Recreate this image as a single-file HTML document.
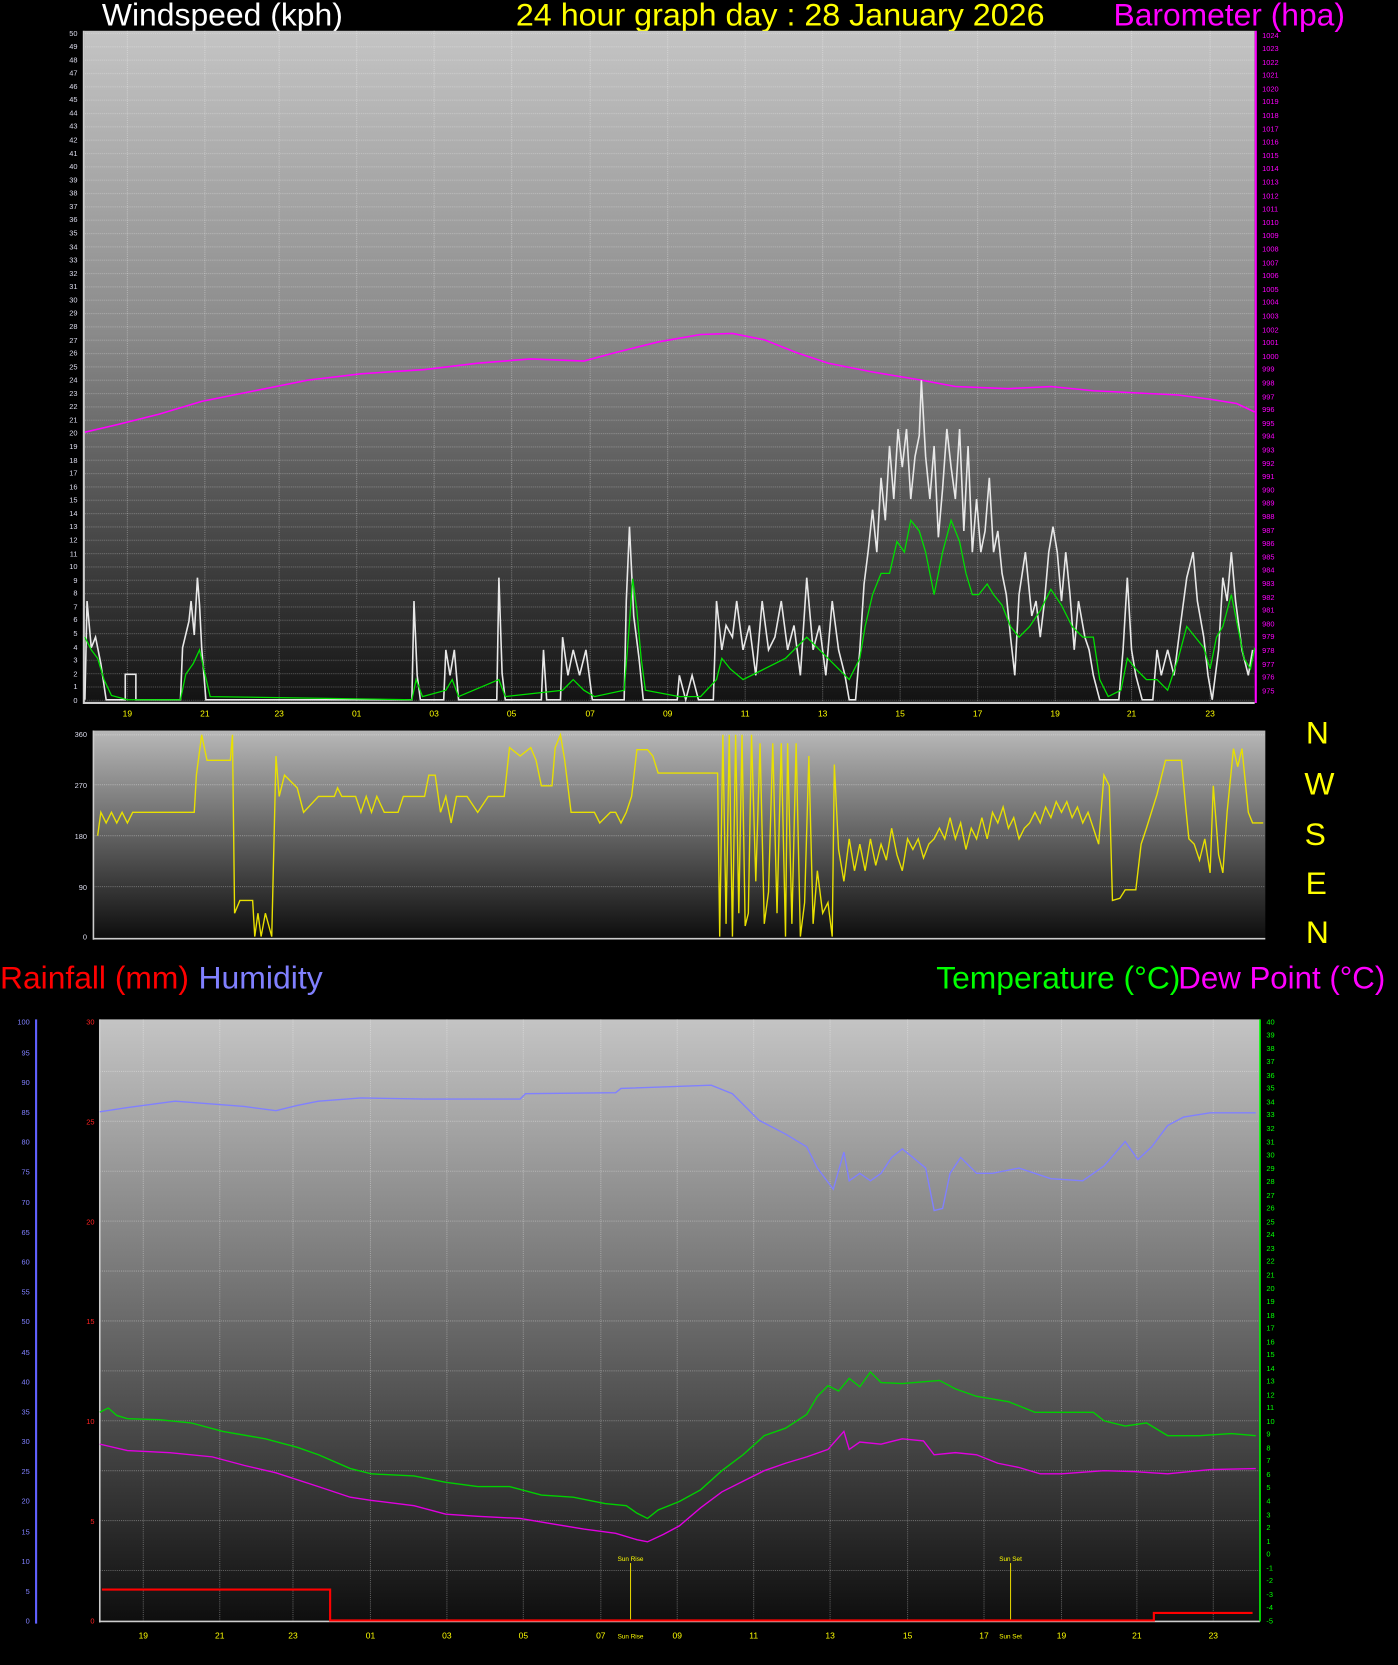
<!DOCTYPE html>
<html><head><meta charset="utf-8"><style>
html,body{margin:0;padding:0;background:#000;}
svg{display:block;}
text{font-family:"Liberation Sans",sans-serif;}
</style></head><body>
<svg width="1398" height="1665" viewBox="0 0 1317 1568" preserveAspectRatio="none" xmlns="http://www.w3.org/2000/svg">
<defs>
<linearGradient id="g1" x1="0" y1="0" x2="0" y2="1"><stop offset="0" stop-color="#c4c4c4"/><stop offset="0.45" stop-color="#8a8a8a"/><stop offset="1" stop-color="#121212"/></linearGradient>
<linearGradient id="g2" x1="0" y1="0" x2="0" y2="1"><stop offset="0" stop-color="#b8b8b8"/><stop offset="1" stop-color="#0c0c0c"/></linearGradient>
<linearGradient id="g3" x1="0" y1="0" x2="0" y2="1"><stop offset="0" stop-color="#c4c4c4"/><stop offset="0.5" stop-color="#6a6a6a"/><stop offset="1" stop-color="#0e0e0e"/></linearGradient>
<pattern id="hg1" x="0" y="31" width="20" height="12.56" patternUnits="userSpaceOnUse"><line x1="0" y1="0.5" x2="20" y2="0.5" stroke="#fff" stroke-opacity="0.25" stroke-dasharray="1 1"/></pattern>
</defs>
<!-- titles -->
<text x="96" y="24" font-size="30" fill="#fff" textLength="227" lengthAdjust="spacingAndGlyphs">Windspeed (kph)</text>
<text x="486" y="24" font-size="30" fill="#ffff00" textLength="498" lengthAdjust="spacingAndGlyphs">24 hour graph day : 28 January 2026</text>
<text x="1049" y="24" font-size="30" fill="#ff00ff" textLength="218" lengthAdjust="spacingAndGlyphs">Barometer (hpa)</text>

<!-- wind plot -->
<rect x="80" y="29" width="1102" height="633" fill="url(#g1)"/>
<rect x="80" y="29" width="1102" height="633" fill="url(#hg1)"/>
<g stroke="#fff" stroke-opacity="0.3" stroke-dasharray="1 1">
<line x1="120" y1="29" x2="120" y2="662"/><line x1="193" y1="29" x2="193" y2="662"/><line x1="263" y1="29" x2="263" y2="662"/><line x1="336" y1="29" x2="336" y2="662"/><line x1="409" y1="29" x2="409" y2="662"/><line x1="482" y1="29" x2="482" y2="662"/><line x1="556" y1="29" x2="556" y2="662"/><line x1="629" y1="29" x2="629" y2="662"/><line x1="702" y1="29" x2="702" y2="662"/><line x1="775" y1="29" x2="775" y2="662"/><line x1="848" y1="29" x2="848" y2="662"/><line x1="921" y1="29" x2="921" y2="662"/><line x1="994" y1="29" x2="994" y2="662"/><line x1="1066" y1="29" x2="1066" y2="662"/><line x1="1140" y1="29" x2="1140" y2="662"/>
</g>
<line x1="79" y1="29" x2="79" y2="663" stroke="#ccc" stroke-width="2"/>
<line x1="79" y1="662" x2="1182" y2="662" stroke="#ccc" stroke-width="2"/>
<line x1="1183" y1="29" x2="1183" y2="662" stroke="#ff00ff" stroke-width="2"/>
<g font-size="7" fill="#dde" text-anchor="end">
<text x="73" y="662">0</text><text x="73" y="649">1</text><text x="73" y="637">2</text><text x="73" y="624">3</text><text x="73" y="612">4</text><text x="73" y="599">5</text><text x="73" y="586">6</text><text x="73" y="574">7</text><text x="73" y="561">8</text><text x="73" y="549">9</text><text x="73" y="536">10</text><text x="73" y="524">11</text><text x="73" y="511">12</text><text x="73" y="498">13</text><text x="73" y="486">14</text><text x="73" y="473">15</text><text x="73" y="461">16</text><text x="73" y="448">17</text><text x="73" y="436">18</text><text x="73" y="423">19</text><text x="73" y="410">20</text><text x="73" y="398">21</text><text x="73" y="385">22</text><text x="73" y="373">23</text><text x="73" y="360">24</text><text x="73" y="348">25</text><text x="73" y="335">26</text><text x="73" y="323">27</text><text x="73" y="310">28</text><text x="73" y="297">29</text><text x="73" y="285">30</text><text x="73" y="272">31</text><text x="73" y="260">32</text><text x="73" y="247">33</text><text x="73" y="235">34</text><text x="73" y="222">35</text><text x="73" y="209">36</text><text x="73" y="197">37</text><text x="73" y="184">38</text><text x="73" y="172">39</text><text x="73" y="159">40</text><text x="73" y="147">41</text><text x="73" y="134">42</text><text x="73" y="121">43</text><text x="73" y="109">44</text><text x="73" y="96">45</text><text x="73" y="84">46</text><text x="73" y="71">47</text><text x="73" y="59">48</text><text x="73" y="46">49</text><text x="73" y="34">50</text>
</g>
<g font-size="7" fill="#ff00ff">
<text x="1189" y="653">975</text><text x="1189" y="640">976</text><text x="1189" y="628">977</text><text x="1189" y="615">978</text><text x="1189" y="602">979</text><text x="1189" y="590">980</text><text x="1189" y="577">981</text><text x="1189" y="565">982</text><text x="1189" y="552">983</text><text x="1189" y="539">984</text><text x="1189" y="527">985</text><text x="1189" y="514">986</text><text x="1189" y="502">987</text><text x="1189" y="489">988</text><text x="1189" y="476">989</text><text x="1189" y="464">990</text><text x="1189" y="451">991</text><text x="1189" y="439">992</text><text x="1189" y="426">993</text><text x="1189" y="413">994</text><text x="1189" y="401">995</text><text x="1189" y="388">996</text><text x="1189" y="376">997</text><text x="1189" y="363">998</text><text x="1189" y="350">999</text><text x="1189" y="338">1000</text><text x="1189" y="325">1001</text><text x="1189" y="313">1002</text><text x="1189" y="300">1003</text><text x="1189" y="287">1004</text><text x="1189" y="275">1005</text><text x="1189" y="262">1006</text><text x="1189" y="250">1007</text><text x="1189" y="237">1008</text><text x="1189" y="224">1009</text><text x="1189" y="212">1010</text><text x="1189" y="199">1011</text><text x="1189" y="187">1012</text><text x="1189" y="174">1013</text><text x="1189" y="161">1014</text><text x="1189" y="149">1015</text><text x="1189" y="136">1016</text><text x="1189" y="124">1017</text><text x="1189" y="111">1018</text><text x="1189" y="98">1019</text><text x="1189" y="86">1020</text><text x="1189" y="73">1021</text><text x="1189" y="61">1022</text><text x="1189" y="48">1023</text><text x="1189" y="36">1024</text>
</g>
<g font-size="8" fill="#ffff00" text-anchor="middle">
<text x="120" y="675">19</text><text x="193" y="675">21</text><text x="263" y="675">23</text><text x="336" y="675">01</text><text x="409" y="675">03</text><text x="482" y="675">05</text><text x="556" y="675">07</text><text x="629" y="675">09</text><text x="702" y="675">11</text><text x="775" y="675">13</text><text x="848" y="675">15</text><text x="921" y="675">17</text><text x="994" y="675">19</text><text x="1066" y="675">21</text><text x="1140" y="675">23</text>
</g>
<polyline fill="none" stroke="#ff00ff" stroke-width="1.5" points="80,407 110,400 150,390 190,378 240,368 290,358 340,352 400,348 450,342 500,338 550,340 580,332 620,322 660,315 690,314 720,320 750,332 780,342 820,350 868,358 900,364 950,366 990,364 1030,368 1070,370 1110,372 1140,376 1165,380 1182,388"/>
<polyline fill="none" stroke="#e8e8e8" stroke-width="1.5" points="80,659 82,566 86,610 90,600 95,625 100,659 118,659 118,635 128,635 128,659 170,659 172,610 178,585 180,566 183,598 186,544 188,570 190,610 194,659 388,659 390,566 393,636 396,659 418,659 420,612 424,636 428,612 432,659 468,659 470,544 473,634 476,659 510,659 512,612 515,659 528,659 530,600 535,636 540,612 546,636 552,612 558,659 588,659 590,566 593,496 597,580 602,620 606,659 638,659 640,636 646,659 652,636 658,659 672,659 675,566 680,612 684,589 690,600 694,566 700,612 706,589 712,636 718,566 724,612 730,600 736,566 742,612 748,589 754,636 760,544 766,612 772,589 778,636 784,566 790,612 796,636 800,659 806,659 810,612 814,550 818,518 822,480 826,520 830,450 834,490 838,420 842,470 846,404 850,440 854,404 858,470 862,430 866,410 868,358 872,430 876,470 880,420 884,506 888,460 892,404 896,440 900,470 904,404 908,500 912,420 916,520 920,470 924,520 928,500 932,450 936,520 940,500 944,540 948,560 952,600 956,636 960,560 966,520 972,580 976,566 980,600 984,566 988,520 992,496 996,520 1000,566 1004,520 1008,560 1012,612 1016,566 1022,600 1026,612 1030,636 1036,659 1054,659 1058,612 1062,544 1066,612 1070,636 1076,659 1086,659 1090,612 1094,636 1100,612 1106,636 1112,589 1118,544 1124,520 1128,566 1134,600 1138,636 1142,659 1148,612 1152,544 1156,566 1160,520 1164,566 1170,612 1176,636 1180,612"/>
<polyline fill="none" stroke="#00e000" stroke-width="1.2" points="80,600 86,612 92,620 98,640 105,655 120,659 170,659 175,635 182,625 188,612 192,630 198,656 388,659 392,640 398,656 420,650 426,640 432,656 470,640 476,656 530,650 540,640 550,650 560,656 588,650 592,600 596,545 600,575 604,620 608,650 640,656 660,656 675,640 680,620 688,630 700,640 720,630 740,620 760,600 780,620 800,640 810,620 815,590 822,560 830,540 838,540 845,510 852,520 858,490 866,500 872,520 880,560 888,520 896,490 904,510 910,540 916,560 922,560 930,550 936,560 944,570 952,590 960,600 970,590 980,575 990,555 1000,570 1010,590 1020,600 1030,600 1036,640 1044,656 1056,650 1062,620 1070,630 1080,640 1090,640 1100,650 1110,620 1118,590 1126,600 1134,610 1140,630 1146,600 1152,590 1160,560 1166,590 1172,620 1178,630 1182,610"/>

<!-- direction plot -->
<rect x="88" y="688" width="1104" height="197" fill="url(#g2)"/>
<g stroke="#fff" stroke-opacity="0.3" stroke-dasharray="1 1">
<line x1="88" y1="739" x2="1192" y2="739"/><line x1="88" y1="787" x2="1192" y2="787"/><line x1="88" y1="835" x2="1192" y2="835"/><line x1="88" y1="692" x2="1192" y2="692"/>
</g>
<line x1="88" y1="688" x2="88" y2="885" stroke="#ccc" stroke-width="1.5"/>
<line x1="88" y1="884" x2="1192" y2="884" stroke="#ccc" stroke-width="1.5"/>
<g font-size="7" fill="#dde" text-anchor="end">
<text x="82" y="694">360</text><text x="82" y="742">270</text><text x="82" y="790">180</text><text x="82" y="838">90</text><text x="82" y="885">0</text>
</g>
<polyline fill="none" stroke="#e8e000" stroke-width="1.3" points="92,787 95,765 100,775 105,765 110,775 115,765 120,775 125,765 130,765 183,765 185,730 190,692 195,716 200,716 217,716 219,692 221,860 226,848 238,848 240,882 243,860 246,882 250,860 256,882 260,712 263,750 268,730 280,742 286,765 300,750 315,750 318,742 322,750 335,750 340,765 345,750 350,765 355,750 362,765 375,765 380,750 400,750 404,730 410,730 415,765 420,750 425,775 430,750 440,750 450,765 460,750 475,750 480,704 490,712 500,704 505,716 510,740 520,740 523,704 528,692 532,716 538,765 560,765 565,775 575,765 580,765 585,775 590,765 595,750 600,706 610,706 615,712 620,728 676,728 678,882 681,692 684,870 687,692 690,882 693,692 696,860 699,692 702,872 705,860 708,692 712,830 716,700 720,870 724,840 728,700 732,860 736,700 740,882 742,700 746,870 750,700 754,882 758,850 762,712 766,870 770,820 775,860 780,850 784,882 786,720 790,800 795,830 800,790 805,820 810,795 815,820 820,790 825,815 830,795 835,810 840,780 845,805 850,820 855,790 860,800 865,790 870,808 875,795 880,790 885,780 890,790 895,770 900,790 905,775 910,800 915,780 920,790 925,770 930,790 935,765 940,775 945,760 950,780 955,770 960,790 965,780 970,775 975,765 980,775 985,760 990,770 995,755 1000,765 1005,755 1010,770 1015,760 1020,775 1025,765 1030,780 1035,795 1040,730 1045,740 1048,848 1055,846 1060,838 1070,838 1075,795 1080,780 1090,748 1098,716 1113,716 1117,760 1120,790 1125,795 1130,810 1135,790 1140,822 1143,740 1148,805 1152,822 1156,765 1162,705 1166,722 1170,705 1176,765 1180,775 1190,775"/>
<g font-size="30" fill="#ffff00" text-anchor="middle">
<text x="1241" y="700">N</text><text x="1243" y="748">W</text><text x="1239" y="796">S</text><text x="1240" y="842">E</text><text x="1241" y="888">N</text>
</g>

<!-- bottom titles -->
<text x="0" y="931" font-size="30" fill="#ff0000" textLength="178" lengthAdjust="spacingAndGlyphs">Rainfall (mm)</text>
<text x="187" y="931" font-size="30" fill="#8080ff" textLength="117" lengthAdjust="spacingAndGlyphs">Humidity</text>
<text x="882" y="931" font-size="30" fill="#00ff00" textLength="230" lengthAdjust="spacingAndGlyphs">Temperature (°C)</text>
<text x="1110" y="931" font-size="30" fill="#ff00ff" textLength="195" lengthAdjust="spacingAndGlyphs">Dew Point (°C)</text>

<!-- bottom plot -->
<rect x="94" y="960" width="1093" height="567" fill="url(#g3)"/>
<g stroke="#fff" stroke-opacity="0.3" stroke-dasharray="1 1">
<line x1="94" y1="1056" x2="1187" y2="1056"/><line x1="94" y1="1150" x2="1187" y2="1150"/><line x1="94" y1="1244" x2="1187" y2="1244"/><line x1="94" y1="1338" x2="1187" y2="1338"/><line x1="94" y1="1432" x2="1187" y2="1432"/><line x1="94" y1="1009" x2="1187" y2="1009"/><line x1="94" y1="1103" x2="1187" y2="1103"/><line x1="94" y1="1197" x2="1187" y2="1197"/><line x1="94" y1="1291" x2="1187" y2="1291"/><line x1="94" y1="1385" x2="1187" y2="1385"/><line x1="94" y1="1479" x2="1187" y2="1479"/>
<line x1="135" y1="960" x2="135" y2="1527"/><line x1="207" y1="960" x2="207" y2="1527"/><line x1="276" y1="960" x2="276" y2="1527"/><line x1="349" y1="960" x2="349" y2="1527"/><line x1="421" y1="960" x2="421" y2="1527"/><line x1="493" y1="960" x2="493" y2="1527"/><line x1="566" y1="960" x2="566" y2="1527"/><line x1="638" y1="960" x2="638" y2="1527"/><line x1="710" y1="960" x2="710" y2="1527"/><line x1="782" y1="960" x2="782" y2="1527"/><line x1="855" y1="960" x2="855" y2="1527"/><line x1="927" y1="960" x2="927" y2="1527"/><line x1="1000" y1="960" x2="1000" y2="1527"/><line x1="1071" y1="960" x2="1071" y2="1527"/><line x1="1143" y1="960" x2="1143" y2="1527"/>
</g>
<line x1="94" y1="960" x2="94" y2="1528" stroke="#ccc" stroke-width="1.5"/>
<line x1="94" y1="1527" x2="1187" y2="1527" stroke="#ccc" stroke-width="1.5"/>
<line x1="1187" y1="960" x2="1187" y2="1527" stroke="#00ff00" stroke-width="1.5"/>
<line x1="34" y1="960" x2="34" y2="1529" stroke="#6060ff" stroke-width="2"/>
<g font-size="7" fill="#8080ff" text-anchor="end">
<text x="28" y="1529">0</text><text x="28" y="1501">5</text><text x="28" y="1473">10</text><text x="28" y="1445">15</text><text x="28" y="1416">20</text><text x="28" y="1388">25</text><text x="28" y="1360">30</text><text x="28" y="1332">35</text><text x="28" y="1304">40</text><text x="28" y="1276">45</text><text x="28" y="1247">50</text><text x="28" y="1219">55</text><text x="28" y="1191">60</text><text x="28" y="1163">65</text><text x="28" y="1135">70</text><text x="28" y="1106">75</text><text x="28" y="1078">80</text><text x="28" y="1050">85</text><text x="28" y="1022">90</text><text x="28" y="994">95</text><text x="28" y="965">100</text>
</g>
<g font-size="7" fill="#ff2020" text-anchor="end">
<text x="89" y="1529">0</text><text x="89" y="1435">5</text><text x="89" y="1341">10</text><text x="89" y="1247">15</text><text x="89" y="1153">20</text><text x="89" y="1059">25</text><text x="89" y="965">30</text>
</g>
<g font-size="7" fill="#00ff00">
<text x="1193" y="1529">-5</text><text x="1193" y="1516">-4</text><text x="1193" y="1504">-3</text><text x="1193" y="1491">-2</text><text x="1193" y="1479">-1</text><text x="1193" y="1466">0</text><text x="1193" y="1454">1</text><text x="1193" y="1441">2</text><text x="1193" y="1429">3</text><text x="1193" y="1416">4</text><text x="1193" y="1403">5</text><text x="1193" y="1391">6</text><text x="1193" y="1378">7</text><text x="1193" y="1366">8</text><text x="1193" y="1353">9</text><text x="1193" y="1341">10</text><text x="1193" y="1328">11</text><text x="1193" y="1316">12</text><text x="1193" y="1303">13</text><text x="1193" y="1291">14</text><text x="1193" y="1278">15</text><text x="1193" y="1266">16</text><text x="1193" y="1253">17</text><text x="1193" y="1241">18</text><text x="1193" y="1228">19</text><text x="1193" y="1216">20</text><text x="1193" y="1203">21</text><text x="1193" y="1190">22</text><text x="1193" y="1178">23</text><text x="1193" y="1165">24</text><text x="1193" y="1153">25</text><text x="1193" y="1140">26</text><text x="1193" y="1128">27</text><text x="1193" y="1115">28</text><text x="1193" y="1103">29</text><text x="1193" y="1090">30</text><text x="1193" y="1078">31</text><text x="1193" y="1065">32</text><text x="1193" y="1052">33</text><text x="1193" y="1040">34</text><text x="1193" y="1027">35</text><text x="1193" y="1015">36</text><text x="1193" y="1002">37</text><text x="1193" y="990">38</text><text x="1193" y="977">39</text><text x="1193" y="965">40</text>
</g>
<g font-size="8" fill="#ffff00" text-anchor="middle">
<text x="135" y="1543">19</text><text x="207" y="1543">21</text><text x="276" y="1543">23</text><text x="349" y="1543">01</text><text x="421" y="1543">03</text><text x="493" y="1543">05</text><text x="566" y="1543">07</text><text x="638" y="1543">09</text><text x="710" y="1543">11</text><text x="782" y="1543">13</text><text x="855" y="1543">15</text><text x="927" y="1543">17</text><text x="1000" y="1543">19</text><text x="1071" y="1543">21</text><text x="1143" y="1543">23</text>
</g>
<g font-size="6" fill="#ffff00" text-anchor="middle">
<text x="594" y="1470">Sun Rise</text><text x="594" y="1543">Sun Rise</text><text x="952" y="1470">Sun Set</text><text x="952" y="1543">Sun Set</text>
</g>
<line x1="594" y1="1472" x2="594" y2="1527" stroke="#e0d000"/>
<line x1="952" y1="1472" x2="952" y2="1527" stroke="#e0d000"/>
<polyline fill="none" stroke="#8080ff" stroke-width="1.3" points="94,1047 120,1043 165,1037 230,1042 260,1046 280,1041 300,1037 340,1034 400,1035 490,1035 495,1030 580,1029 585,1025 670,1022 690,1030 705,1045 715,1055 740,1068 760,1080 770,1100 785,1120 795,1085 800,1112 810,1105 820,1112 830,1105 840,1090 850,1082 860,1090 872,1100 880,1140 888,1138 895,1105 905,1090 920,1105 935,1105 960,1100 990,1110 1020,1112 1040,1098 1060,1075 1072,1092 1085,1080 1100,1060 1115,1052 1140,1048 1183,1048"/>
<polyline fill="none" stroke="#00d000" stroke-width="1.3" points="94,1330 102,1326 110,1333 120,1336 150,1337 180,1340 210,1348 250,1355 280,1363 300,1370 330,1383 350,1388 390,1390 420,1396 450,1400 480,1400 510,1408 540,1410 570,1416 590,1418 600,1425 610,1430 620,1422 640,1414 660,1403 680,1385 700,1370 720,1352 740,1345 760,1332 770,1315 780,1305 790,1310 800,1298 810,1306 820,1292 830,1302 850,1303 885,1300 900,1308 920,1315 950,1320 960,1324 975,1330 1000,1330 1030,1330 1040,1338 1060,1343 1080,1340 1100,1352 1130,1352 1160,1350 1183,1352"/>
<polyline fill="none" stroke="#e000e0" stroke-width="1.3" points="94,1360 120,1366 160,1368 200,1372 230,1380 260,1387 300,1400 330,1410 350,1413 390,1418 420,1426 450,1428 490,1430 520,1435 550,1440 580,1444 600,1450 610,1452 625,1445 640,1437 660,1420 680,1405 700,1395 720,1385 740,1378 760,1372 780,1365 795,1348 800,1365 810,1358 830,1360 850,1355 870,1357 880,1370 900,1368 920,1370 940,1378 960,1382 980,1388 1000,1388 1040,1385 1070,1386 1100,1388 1140,1384 1183,1383"/>
<polyline fill="none" stroke="#ff0000" stroke-width="2" points="96,1497 311,1497 311,1526 1087,1526 1087,1519 1180,1519"/>
</svg>
</body></html>
